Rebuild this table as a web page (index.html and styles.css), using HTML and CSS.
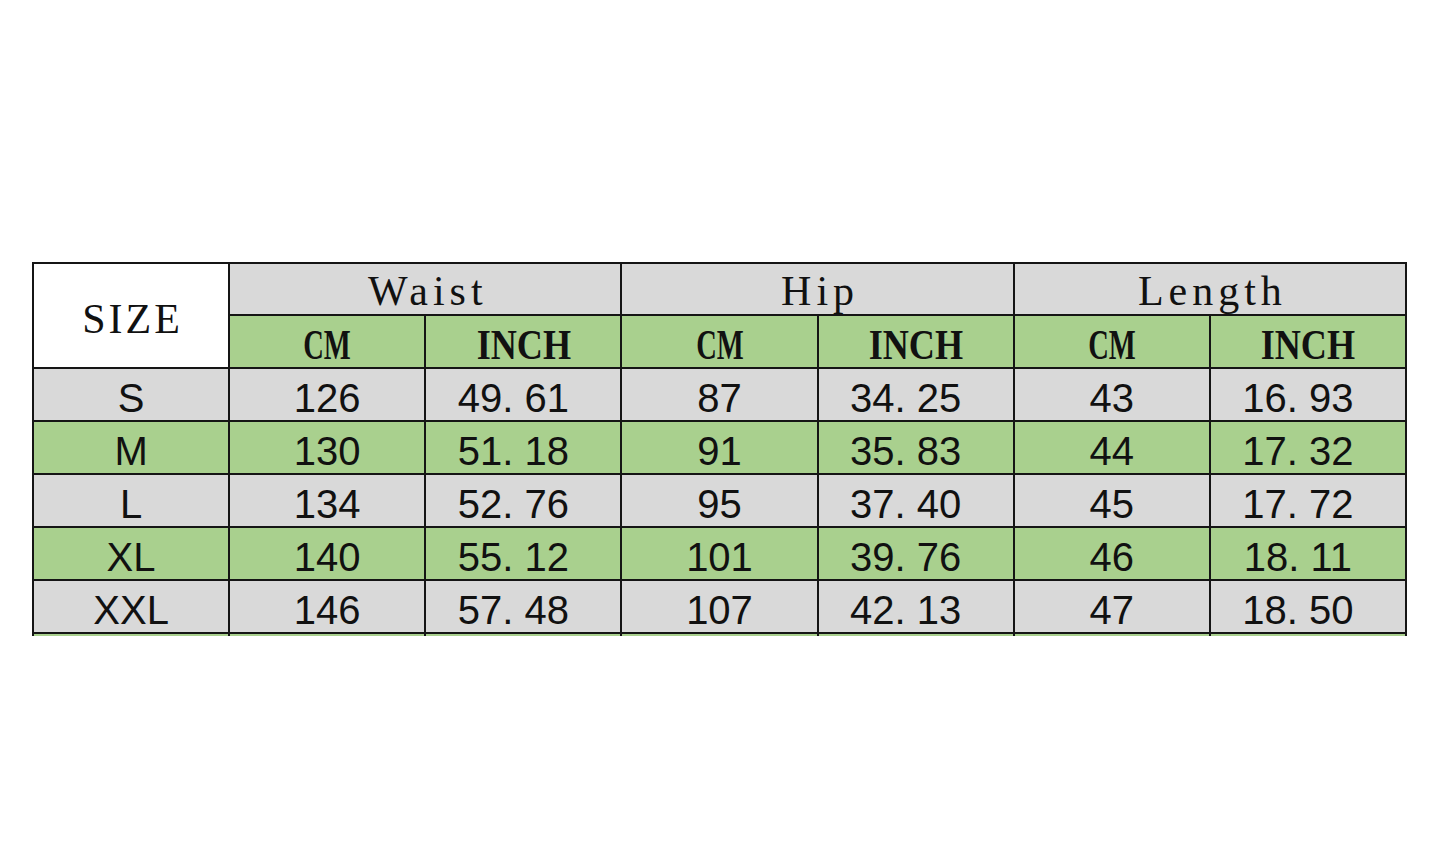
FILE: index.html
```html
<!DOCTYPE html>
<html>
<head>
<meta charset="utf-8">
<link rel="stylesheet" href="styles.css">
</head>
<body>
<div class="page">
  <div class="clip">
    <table class="chart">
      <colgroup>
        <col><col><col><col><col><col><col>
      </colgroup>
      <tr class="h1">
        <th class="size" rowspan="2">SIZE</th>
        <th class="grp" colspan="2">Waist</th>
        <th class="grp" colspan="2">Hip</th>
        <th class="grp" colspan="2">Length</th>
      </tr>
      <tr class="h2">
        <th><span class="cm">CM</span></th><th><span class="inch">INCH</span></th>
        <th><span class="cm">CM</span></th><th><span class="inch">INCH</span></th>
        <th><span class="cm">CM</span></th><th><span class="inch">INCH</span></th>
      </tr>
      <tr class="gray"><td>S</td><td>126</td><td class="dec">49. 61</td><td>87</td><td class="dec">34. 25</td><td>43</td><td class="dec">16. 93</td></tr>
      <tr class="green"><td>M</td><td>130</td><td class="dec">51. 18</td><td>91</td><td class="dec">35. 83</td><td>44</td><td class="dec">17. 32</td></tr>
      <tr class="gray"><td>L</td><td>134</td><td class="dec">52. 76</td><td>95</td><td class="dec">37. 40</td><td>45</td><td class="dec">17. 72</td></tr>
      <tr class="green"><td>XL</td><td>140</td><td class="dec">55. 12</td><td>101</td><td class="dec">39. 76</td><td>46</td><td class="dec">18. 11</td></tr>
      <tr class="gray"><td>XXL</td><td>146</td><td class="dec">57. 48</td><td>107</td><td class="dec">42. 13</td><td>47</td><td class="dec">18. 50</td></tr>
      <tr class="green"><td></td><td></td><td></td><td></td><td></td><td></td><td></td></tr>
    </table>
  </div>
</div>
</body>
</html>
```

FILE: styles.css
```css
html, body {
  margin: 0;
  padding: 0;
  background: #ffffff;
}

.page {
  width: 1445px;
  height: 863px;
  padding: 262px 0 0 32px;
  box-sizing: border-box;
}

.clip {
  width: 1376px;
  height: 374px;
  overflow: hidden;
}

.chart {
  border-collapse: collapse;
  table-layout: fixed;
  width: 1375px;
}

.chart col {
  width: 196px;
}

.chart th,
.chart td {
  border: 2px solid #151515;
  padding: 0;
  text-align: center;
  vertical-align: middle;
  color: #111111;
}

.chart th {
  font-family: "Liberation Serif", "Times New Roman", serif;
  font-size: 42px;
  font-weight: bold;
  line-height: 1;
}

.chart td {
  font-family: "Liberation Sans", Arial, sans-serif;
  font-size: 40px;
  line-height: 1;
  padding-top: 6px;
}

.chart td.dec {
  padding-right: 20px;
}

.h1 {
  height: 52px;
}

.h2 {
  height: 53px;
}

.chart tr.gray,
.chart tr.green {
  height: 53px;
}

.chart th.size {
  background: #ffffff;
  font-weight: normal;
  letter-spacing: 3px;
  padding-left: 3px;
  padding-top: 7px;
}

.chart th.grp {
  background: #d9d9d9;
  font-weight: normal;
  letter-spacing: 5px;
  padding-left: 5px;
  padding-top: 4px;
}

.h2 th {
  background: #a9d08e;
  padding-top: 7px;
}

.cm,
.inch {
  display: inline-block;
}

.cm {
  transform: scaleX(0.68);
}

.inch {
  transform: scaleX(0.86);
}

.gray td {
  background: #d9d9d9;
}

.green td {
  background: #a9d08e;
}
```
